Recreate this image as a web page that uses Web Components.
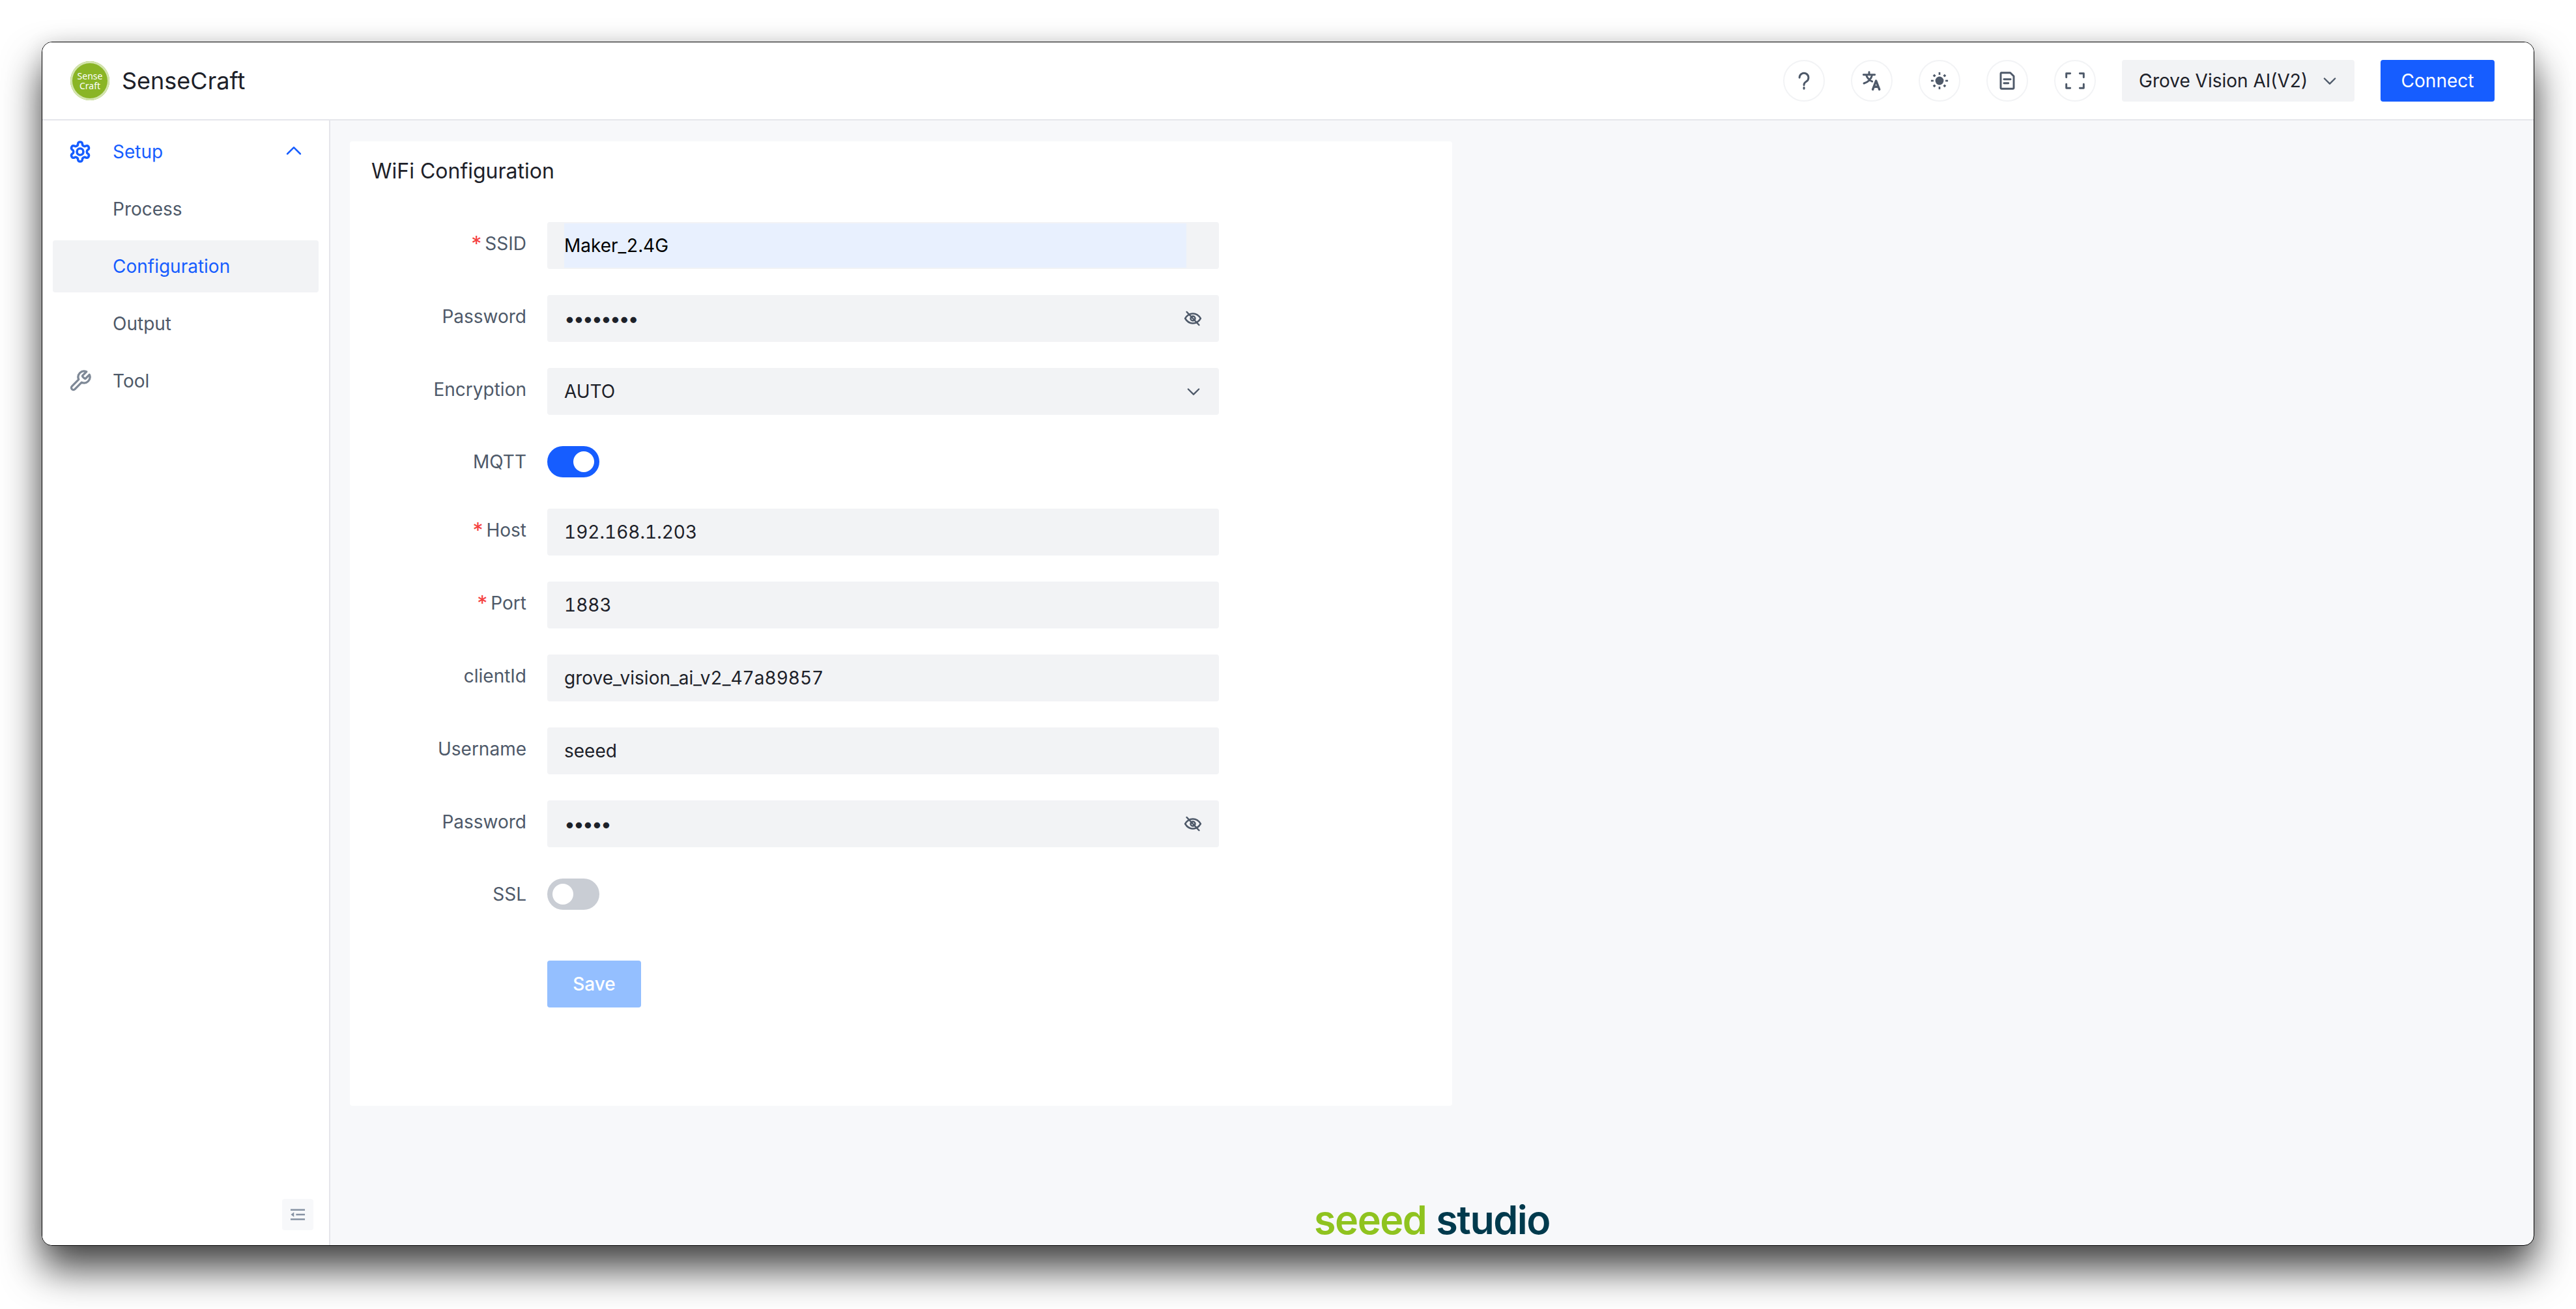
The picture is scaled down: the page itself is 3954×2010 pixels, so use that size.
<!DOCTYPE html>
<html>
<head>
<meta charset="utf-8">
<title>SenseCraft</title>
<style>
  html, body { margin: 0; height: 100%; background: #fff; }
  body { font-family: Inter, "Noto Sans", sans-serif; padding: 64px; box-sizing: border-box; height: 2010px; }
</style>
</head>
<body>
<sc-app>
  <sc-header slot="header"></sc-header>
  <sc-sidebar slot="sidebar"></sc-sidebar>
  <sc-wifi-form></sc-wifi-form>
</sc-app>

<script>
// shared line icons, drawn on a 24 unit box unless stated
const ICONS = {
  help: '<path d="M6.8 8.4a5.2 5.2 0 1 1 8 4.4c-1.800 1.100-2.800 2-2.800 3.700v.6"/><path d="M12 19.800v1.400"/>',
  lang: '<path d="M2.500 5h13M9 2v3M12.500 5c-.8 4.500-4.400 8.200-9.500 10M5.500 5c1 3.500 3.500 6.200 7 7.800"/><path stroke-width="2.600" d="M13.200 22l3.800-10 3.800 10M14.600 19h4.800"/>',
  sun: '<circle cx="12" cy="12" r="4.800" fill="currentColor" stroke="none"/><g fill="currentColor" stroke="none"><rect x="11" y="2.200" width="2" height="3"/><rect x="11" y="18.800" width="2" height="3"/><rect x="2.200" y="11" width="3" height="2"/><rect x="18.800" y="11" width="3" height="2"/><rect x="4.800" y="4.800" width="2.600" height="2.600" transform="rotate(45 6.100 6.100)"/><rect x="16.600" y="4.800" width="2.600" height="2.600" transform="rotate(45 17.900 6.100)"/><rect x="4.800" y="16.600" width="2.600" height="2.600" transform="rotate(45 6.100 17.900)"/><rect x="16.600" y="16.600" width="2.600" height="2.600" transform="rotate(45 17.900 17.900)"/></g>',
  doc: '<path d="M5 2.800h10.500l4 4V20a1.200 1.200 0 0 1-1.200 1.200H5.700A1.200 1.200 0 0 1 4.500 20V4a1.200 1.200 0 0 1 .5-1.200z"/><path d="M8.200 10.300h7.600M8.200 14.800h5.100"/>',
  full: '<path d="M2 8V3.500h4.500M17.500 3.500H22V8M22 16v4.500h-4.500M6.500 20.500H2V16"/>',
  chevron: '<path d="M5 9l7 7 7-7"/>',
  eyeOff: '<path d="M2.500 12C5 7.800 8.200 6 12 6s7 1.800 9.500 6c-2.500 4.200-5.700 6-9.500 6s-7-1.800-9.500-6z"/><circle cx="12" cy="12" r="2.800"/><path d="M4.500 4l15 16"/>',
  gear: '<path d="M12.220 2h-.44a2 2 0 0 0-2 2v.18a2 2 0 0 1-1 1.730l-.43.25a2 2 0 0 1-2 0l-.15-.08a2 2 0 0 0-2.730.73l-.22.38a2 2 0 0 0 .73 2.730l.15.1a2 2 0 0 1 1 1.720v.51a2 2 0 0 1-1 1.740l-.15.09a2 2 0 0 0-.73 2.730l.22.38a2 2 0 0 0 2.730.73l.15-.08a2 2 0 0 1 2 0l.43.25a2 2 0 0 1 1 1.730V20a2 2 0 0 0 2 2h.44a2 2 0 0 0 2-2v-.18a2 2 0 0 1 1-1.730l.43-.25a2 2 0 0 1 2 0l.15.08a2 2 0 0 0 2.730-.73l.22-.39a2 2 0 0 0-.73-2.730l-.15-.08a2 2 0 0 1-1-1.740v-.5a2 2 0 0 1 1-1.740l.15-.09a2 2 0 0 0 .73-2.730l-.22-.38a2 2 0 0 0-2.730-.73l-.15.08a2 2 0 0 1-2 0l-.43-.25a2 2 0 0 1-1-1.730V4a2 2 0 0 0-2-2z"/><circle cx="12" cy="12" r="3.300"/>',
  wrench: '<path d="M14.700 6.300a1 1 0 0 0 0 1.400l1.600 1.600a1 1 0 0 0 1.400 0l3.770-3.770a6 6 0 0 1-7.940 7.940l-6.910 6.910a2.120 2.120 0 0 1-3-3l6.910-6.910a6 6 0 0 1 7.940-7.940l-3.760 3.760z"/>',
  outdent: '<path d="M0 1h21M8 8h13M0 15h21"/><path d="M5 4.500v7L0.500 8z" fill="currentColor" stroke="none"/>'
};
const svg = (name, size, sw = 2, box = '0 0 24 24') =>
  `<svg width="${size}" height="${size}" viewBox="${box}" fill="none" stroke="currentColor" stroke-width="${sw}" stroke-linecap="round" stroke-linejoin="round">${ICONS[name]}</svg>`;

class ScApp extends HTMLElement {
  constructor() {
    super();
    this.attachShadow({ mode: 'open' }).innerHTML = `
      <style>
        :host {
          display: grid;
          grid-template-rows: 120px 1fr;
          grid-template-columns: 442px 1fr;
          width: 3826px;
          height: 1849px;
          box-sizing: border-box;
          border: 1px solid #000;
          border-radius: 16px;
          background: #f7f8fa;
          box-shadow: 0 36px 60px rgba(0,0,0,.72), 0 0 30px rgba(0,0,0,.1);
          overflow: hidden;
        }
        ::slotted([slot=header]) { grid-column: 1 / 3; }
        main {
          display: flex;
          flex-direction: column;
          min-height: 0;
          padding: 32px 0 0 30px;
        }
        .card { width: 1692px; }
        footer {
          margin: auto 0 0 -30px;
          padding-bottom: 14px;
          display: flex;
          justify-content: center;
          align-items: baseline;
          gap: 15px;
          font-size: 61px;
          line-height: 50px;
          font-weight: 600;
          letter-spacing: -1.5px;
        }
        .seeed { color: #8fc31f; }
        .studio { color: #003a4d; }
      </style>
      <slot name="header"></slot>
      <slot name="sidebar"></slot>
      <main>
        <div class="card"><slot></slot></div>
        <footer><span class="seeed">seeed</span><span class="studio">studio</span></footer>
      </main>`;
  }
}

class ScHeader extends HTMLElement {
  constructor() {
    super();
    const round = ['help', 'lang', 'sun', 'doc', 'full'].map(n => `<span class="round">${svg(n, 32, 2.2)}</span>`).join('');
    this.attachShadow({ mode: 'open' }).innerHTML = `
      <style>
        :host {
          display: flex;
          align-items: center;
          height: 120px;
          box-sizing: border-box;
          padding: 0 60px 0 43px;
          background: #fff;
          border-bottom: 2px solid #e5e6eb;
        }
        .logo {
          width: 60px; height: 60px;
          border-radius: 50%;
          background: #8ab526;
          box-shadow: inset 0 0 0 3px #d3e4ae;
          display: flex; flex-direction: column; align-items: center; justify-content: center;
          color: #fff;
          font-family: "Noto Sans", sans-serif;
          font-size: 14px;
          line-height: 15px;
          margin-right: 19px;
        }
        .name { font-size: 36px; color: #1d2129; }
        .tools { margin-left: auto; display: flex; align-items: center; gap: 40px; }
        .round {
          width: 64px; height: 64px;
          box-sizing: border-box;
          border: 2px solid #f2f3f5;
          border-radius: 50%;
          display: flex; align-items: center; justify-content: center;
          color: #4e5969;
        }
        .select {
          width: 357px; height: 64px;
          box-sizing: border-box;
          padding: 0 24px 0 26px;
          background: #f2f3f5;
          border-radius: 4px;
          display: flex; align-items: center; justify-content: space-between;
          font-size: 28px;
          color: #1d2129;
          white-space: nowrap;
        }
        .select svg { color: #4e5969; }
        .connect {
          width: 175px; height: 64px;
          background: #165dff;
          color: #fff;
          border-radius: 4px;
          font-size: 28px;
          display: flex; align-items: center; justify-content: center;
        }
      </style>
      <span class="logo"><span>Sense</span><span>Craft</span></span>
      <span class="name">SenseCraft</span>
      <div class="tools">
        ${round}
        <div class="select"><span>Grove Vision AI(V2)</span>${svg('chevron', 28, 2)}</div>
        <div class="connect">Connect</div>
      </div>`;
  }
}

class ScSidebar extends HTMLElement {
  constructor() {
    super();
    const lead = (name, size, sw) => svg(name, size, sw).replace('<svg', '<svg class="lead"');
    this.attachShadow({ mode: 'open' }).innerHTML = `
      <style>
        :host {
          display: flex;
          flex-direction: column;
          box-sizing: border-box;
          padding: 8px 16px 23px 16px;
          background: #fff;
          border-right: 2px solid #e5e6eb;
          font-size: 28px;
          color: #4e5969;
        }
        .item {
          height: 80px;
          margin-bottom: 8px;
          flex: none;
          display: flex;
          align-items: center;
          padding-left: 92px;
          border-radius: 4px;
          position: relative;
        }
        .item svg { position: absolute; }
        .item .lead { left: 24px; top: 22px; }
        .tool .lead { color: #7f8997; }
        .item .arrow { right: 21px; top: 22px; transform: rotate(180deg); }
        .on { color: #165dff; }
        .sel { background: #f2f3f5; color: #165dff; }
        .collapse {
          margin-top: auto;
          align-self: flex-end;
          margin-right: 8px;
          width: 48px; height: 48px;
          background: #f7f8fa;
          border-radius: 4px;
          display: flex; align-items: center; justify-content: center;
          color: #8692a3;
        }
      </style>
      <div class="item on">${lead('gear', 36, 2.4)}Setup${svg('chevron', 34, 1.8).replace('<svg', '<svg class="arrow"')}</div>
      <div class="item">Process</div>
      <div class="item sel">Configuration</div>
      <div class="item">Output</div>
      <div class="item tool">${lead('wrench', 36, 2.2)}Tool</div>
      <div class="collapse">${svg('outdent', 22, 2.4, '0 0 21 16').replace('stroke-linecap="round"', 'stroke-linecap="butt"')}</div>`;
  }
}

class ScField extends HTMLElement {
  connectedCallback() {
    const label = this.getAttribute('label');
    const req = this.hasAttribute('required') ? '<i>*</i>' : '';
    const kind = this.getAttribute('kind') || 'text';
    const value = this.getAttribute('value') || '';
    let control = '';
    if (kind === 'switch') {
      control = `<span class="sw ${this.hasAttribute('on') ? 'swon' : ''}"><b></b></span>`;
    } else {
      const after = kind === 'secret' ? svg('eyeOff', 30, 2) : kind === 'select' ? svg('chevron', 28, 2) : '';
      const cls = kind === 'secret' ? 'val secret' : 'val';
      control = `<div class="input ${this.hasAttribute('autofill') ? 'auto' : ''}"><span class="${cls}">${value}</span>${after}</div>`;
    }
    this.attachShadow({ mode: 'open' }).innerHTML = `
      <style>
        :host {
          display: grid;
          grid-template-columns: 238px 1031px;
          column-gap: 32px;
          align-items: center;
          margin-bottom: 40px;
          font-size: 28px;
        }
        label {
          text-align: right;
          color: #4e5969;
          position: relative;
          top: ${kind === 'switch' ? '0' : '-3px'};
          white-space: nowrap;
        }
        i { color: #f53f3f; font-style: normal; font-size: 32px; line-height: 1; margin-right: 5px; vertical-align: -2px; }
        .input {
          height: 72px;
          box-sizing: border-box;
          background: #f2f3f5;
          border-radius: 4px;
          padding: 0 25px 0 26px;
          display: flex; align-items: center; justify-content: space-between;
          color: #1d2129;
          position: relative;
          white-space: nowrap;
          font-variant-numeric: tabular-nums;
        }
        .input svg { color: #4e5969; }
        .auto { background: linear-gradient(#e8f0fe, #e8f0fe) 26px 2px / 955px 68px no-repeat, #f2f3f5; color: #000; }
        .secret { font-size: 30px; letter-spacing: -2.9px; }
        .sw {
          display: block;
          width: 80px; height: 48px;
          margin: 8px 0;
          border-radius: 24px;
          background: #c9cdd4;
          position: relative;
        }
        .sw b {
          position: absolute;
          top: 8px; left: 8px;
          width: 32px; height: 32px;
          border-radius: 50%;
          background: #fff;
        }
        .swon { background: #165dff; }
        .swon b { left: 40px; }
      </style>
      <label>${req}${label}</label>
      ${control}`;
  }
}

class ScWifiForm extends HTMLElement {
  constructor() {
    super();
    this.attachShadow({ mode: 'open' }).innerHTML = `
      <style>
        :host {
          display: block;
          height: 1481px;
          box-sizing: border-box;
          padding: 0 33px;
          background: #fff;
          border-radius: 4px;
        }
        h2 {
          margin: 0;
          height: 124px;
          box-sizing: border-box;
          padding-top: 26px;
          font-size: 32px;
          line-height: 40px;
          font-weight: 400;
          color: #1d2129;
        }
        .save {
          margin: 70px 0 0 270px;
          width: 144px; height: 72px;
          background: #94bfff;
          color: #fff;
          border-radius: 4px;
          font-size: 28px;
          font-weight: 500;
          display: flex; align-items: center; justify-content: center;
        }
      </style>
      <h2>WiFi Configuration</h2>
      <slot></slot>
      <div class="save">Save</div>`;
    this.innerHTML = `
      <sc-field label="SSID" required value="Maker_2.4G" autofill></sc-field>
      <sc-field label="Password" kind="secret" value="••••••••"></sc-field>
      <sc-field label="Encryption" kind="select" value="AUTO"></sc-field>
      <sc-field label="MQTT" kind="switch" on></sc-field>
      <sc-field label="Host" required value="192.168.1.203"></sc-field>
      <sc-field label="Port" required value="1883"></sc-field>
      <sc-field label="clientId" value="grove_vision_ai_v2_47a89857"></sc-field>
      <sc-field label="Username" value="seeed"></sc-field>
      <sc-field label="Password" kind="secret" value="•••••"></sc-field>
      <sc-field label="SSL" kind="switch"></sc-field>`;
  }
}

customElements.define('sc-app', ScApp);
customElements.define('sc-header', ScHeader);
customElements.define('sc-sidebar', ScSidebar);
customElements.define('sc-field', ScField);
customElements.define('sc-wifi-form', ScWifiForm);
</script>
</body>
</html>
